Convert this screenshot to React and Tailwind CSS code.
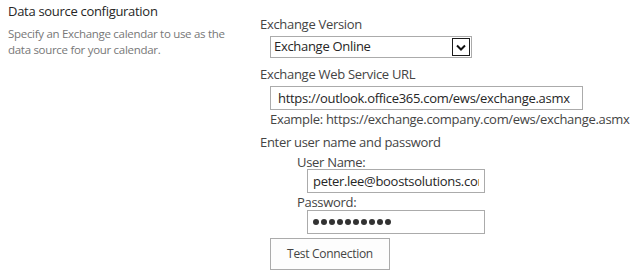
import React from 'react';

const font = { fontFamily: '"Open Sans", "Noto Sans", sans-serif' };

const App = () => {
  return (
    <div className="w-[644px] h-[275px] bg-white text-[#444] flex" style={font}>
      <div className="w-[252px] pl-2 pt-[2px]">
        <h3 className="text-[13px] leading-[18px] text-[#262626] tracking-[-0.3px]">Data source configuration</h3>
        <p className="mt-[6px] w-[226px] text-[11.5px] leading-[16px] text-[#777] tracking-[-0.3px]">
          Specify an Exchange calendar to use as the data source for your calendar.
        </p>
      </div>

      <div className="pl-2 pt-[15px] text-[13px] tracking-[-0.3px]">
        <div className="leading-[18px]">Exchange Version</div>
        <div className="ml-[10px] mt-[3px] w-[202px] h-[22px] border border-[#ababab] flex items-center justify-between pl-[3px] pr-[1px] text-[#262626]">
          <span>Exchange Online</span>
          <span className="w-[18px] h-[18px] border border-[#1a1a1a] flex items-center justify-center bg-white">
            <svg width="10" height="7" viewBox="0 0 10 7">
              <path d="M1 1.5 L5 5.5 L9 1.5" stroke="#111" strokeWidth="2" fill="none" />
            </svg>
          </span>
        </div>

        <div className="mt-[7px] leading-[18px]">Exchange Web Service URL</div>
        <input
          readOnly
          value="https://outlook.office365.com/ews/exchange.asmx"
          className="block ml-[10px] mt-[3px] w-[313px] h-[24px] border border-[#ababab] px-[7px] text-[13px] text-[#262626] tracking-[-0.3px] outline-none"
        />
        <div className="ml-[10px] leading-[18px]">Example: https://exchange.company.com/ews/exchange.asmx</div>

        <div className="mt-[5px] leading-[18px]">Enter user name and password</div>
        <div className="ml-[37px]">
          <div className="mt-[2px] leading-[18px]">User Name:</div>
          <input
            readOnly
            value="peter.lee@boostsolutions.com"
            className="block ml-[10px] mt-[-2px] w-[178px] h-[24px] border border-[#ababab] px-[5px] text-[13px] text-[#262626] tracking-[-0.3px] outline-none"
          />
          <div className="leading-[18px]">Password:</div>
          <div className="ml-[10px] mt-[-1px] w-[178px] h-[24px] border border-[#ababab] flex items-center gap-[2px] px-[5px]">
            {Array.from({ length: 10 }).map((_, i) => (
              <span key={i} className="w-[6px] h-[6px] rounded-full bg-[#333]" />
            ))}
          </div>
        </div>
        <button className="block ml-[10px] mt-[4px] w-[120px] h-[32px] border border-[#ababab] bg-[#fdfdfd] text-[12px] text-[#444]">
          Test Connection
        </button>
      </div>
    </div>
  );
};

export default App;
